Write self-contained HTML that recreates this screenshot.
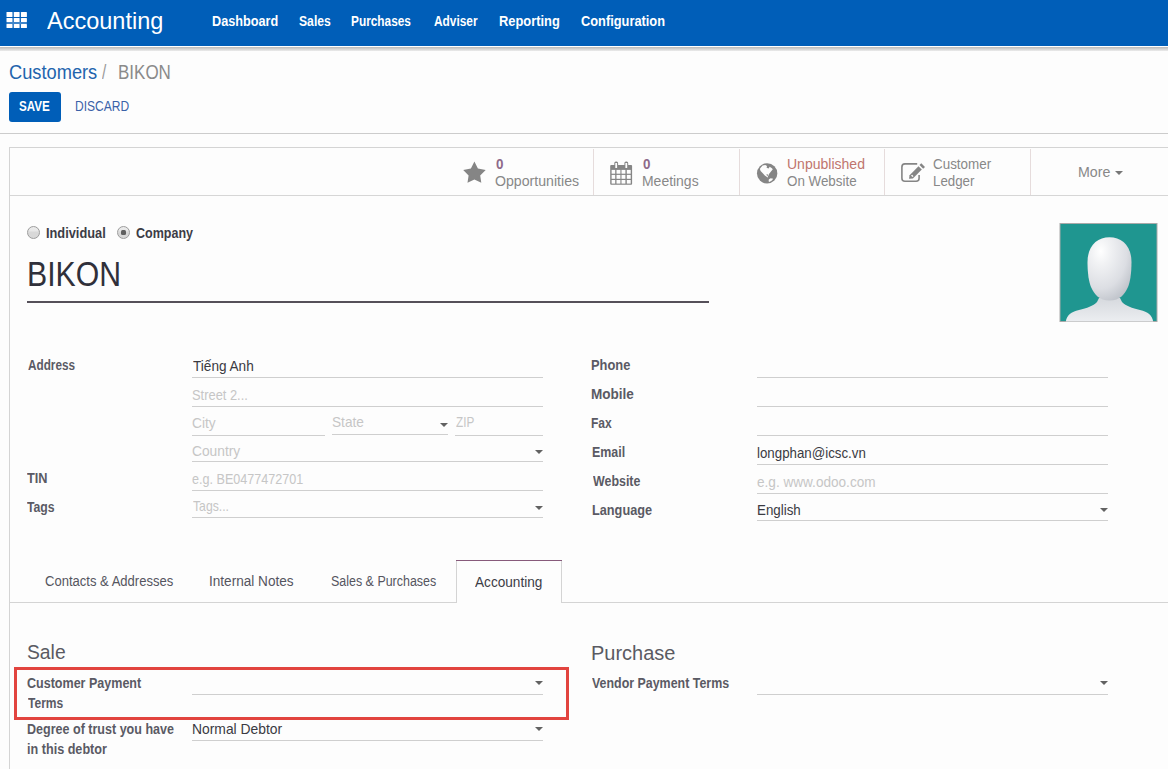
<!DOCTYPE html>
<html><head><meta charset="utf-8">
<style>
html,body{margin:0;padding:0;}
body{width:1168px;height:769px;overflow:hidden;position:relative;background:#fdfdfd;font-family:"Liberation Sans",sans-serif;}
.t{position:absolute;white-space:nowrap;transform-origin:0 0;}
.r{position:absolute;}
.hl{position:absolute;height:1px;background:#cfcfcf;}
.caret{position:absolute;width:0;height:0;border-left:4px solid transparent;border-right:4px solid transparent;border-top:4px solid #626262;}
.sep{position:absolute;top:149px;width:1px;height:46px;background:#e6dcdc;}
</style></head><body>
<!-- navbar -->
<div class="r" style="left:0;top:0;width:1168px;height:46px;background:#005eb8"></div>
<div class="r" style="left:0;top:46px;width:1168px;height:1px;background:#ffffff"></div>
<div class="r" style="left:0;top:47px;width:1168px;height:4px;background:linear-gradient(#b9b9b9,#ececec)"></div>
<!-- app grid icon -->
<svg class="r" style="left:0;top:0" width="30" height="30" viewBox="0 0 30 30"><g fill="#fff"><rect x="6.5" y="12" width="6" height="5" rx="0.6"/><rect x="13.75" y="12" width="5.85" height="5" rx="0.6"/><rect x="20.9" y="12" width="6" height="5" rx="0.6"/><rect x="6.5" y="18" width="6" height="4" rx="0.6"/><rect x="13.75" y="18" width="5.85" height="4" rx="0.6"/><rect x="20.9" y="18" width="6" height="4" rx="0.6"/><rect x="6.5" y="24" width="6" height="4" rx="0.6"/><rect x="13.75" y="24" width="5.85" height="4" rx="0.6"/><rect x="20.9" y="24" width="6" height="4" rx="0.6"/></g><rect x="6.5" y="22" width="20.4" height="2" fill="#fff" opacity="0.25"/></svg>
<!-- control panel -->
<div class="r" style="left:9px;top:92px;width:52px;height:30px;background:#005eb8;border-radius:3px"></div>
<div class="hl" style="left:0;top:133px;width:1168px;background:#cccccc"></div>
<!-- sheet -->
<div class="r" style="left:9px;top:147px;width:1200px;height:700px;border:1px solid #d4d4d4;background:#fdfdfd;box-sizing:border-box"></div>
<div class="hl" style="left:10px;top:195px;width:1158px;background:#d6d6d6"></div>
<div class="sep" style="left:593px"></div>
<div class="sep" style="left:739px"></div>
<div class="sep" style="left:884px"></div>
<div class="sep" style="left:1030px"></div>
<!-- star -->
<svg class="r" style="left:458px;top:156px" width="32" height="32" viewBox="0 0 32 32">
<path fill="#858585" d="M16.4 5.6L19.9 12.6L27.7 13.9L22.2 19.5L23.3 26.8L16.4 23.6L9.5 26.8L10.6 19.5L5.2 13.9L12.9 12.6Z"/></svg>
<!-- calendar -->
<svg class="r" style="left:605px;top:156px" width="32" height="34" viewBox="0 0 32 34">
<rect x="5.2" y="9.1" width="21.9" height="19.7" rx="1" fill="#858585"/>
<g fill="#fdfdfd">
<rect x="6.6" y="13.9" width="3.6" height="3.8"/><rect x="11.5" y="13.9" width="3.9" height="3.8"/><rect x="16.5" y="13.9" width="3.9" height="3.8"/><rect x="21.8" y="13.9" width="3.9" height="3.8"/>
<rect x="6.6" y="18.9" width="3.6" height="3.9"/><rect x="11.5" y="18.9" width="3.9" height="3.9"/><rect x="16.5" y="18.9" width="3.9" height="3.9"/><rect x="21.8" y="18.9" width="3.9" height="3.9"/>
<rect x="6.6" y="24" width="3.6" height="3.6"/><rect x="11.5" y="24" width="3.9" height="3.6"/><rect x="16.5" y="24" width="3.9" height="3.6"/><rect x="21.8" y="24" width="3.9" height="3.6"/>
</g>
<rect x="9.3" y="5.4" width="3.8" height="7.2" rx="1.6" fill="#858585"/>
<rect x="19.4" y="5.4" width="3.8" height="7.2" rx="1.6" fill="#858585"/>
<rect x="10.3" y="7.0" width="1.8" height="5" fill="#fdfdfd"/>
<rect x="20.4" y="7.0" width="1.8" height="5" fill="#fdfdfd"/>
</svg>
<!-- globe -->
<svg class="r" style="left:752px;top:156px" width="32" height="34" viewBox="0 0 32 34">
<circle cx="15.15" cy="17.4" r="10.2" fill="#858585"/>
<path fill="#fdfdfd" d="M8.2 12.2L10.6 9.5L13.3 9.1L15 10L14.6 11.7L16.6 12.4L17.7 10.8L19.9 12.2L20.8 13.3L18.6 15.9L17 18.1L16.4 19.5L15.7 20.8L16.2 21.7L14.6 20.8L12.8 19.5L10.8 17.3L8.6 15L8 13.3Z"/>
<path fill="#858585" d="M14.3 18.6L15.6 18.2L16.2 19.3L15.2 19.9Z"/>
<path fill="#fdfdfd" d="M16.8 23.5L18.6 22.3L21.2 22.8L19.9 24.6L17.3 25.9L16.6 25.2Z"/>
</svg>
<!-- edit icon -->
<svg class="r" style="left:896px;top:156px" width="34" height="34" viewBox="0 0 34 34">
<path fill="none" stroke="#858585" stroke-width="1.6" d="M21.2 7.9H8.9a3 3 0 0 0-3 3V22.2a3 3 0 0 0 3 3H20.1a3 3 0 0 0 3-3V19"/>
<path fill="#858585" d="M13 22.8L13.6 19.2L22.5 10.3L25.8 13.6L16.9 22.5Z"/>
<path fill="#858585" d="M25.3 7.2L29 10.9L27.2 12.7L23.5 9Z"/>
<path fill="#fdfdfd" d="M15 19.6L16.2 18.8L17.5 20.2L16.4 21Z"/>
</svg>
<div class="caret" style="left:1115px;top:171px;border-top-color:#777"></div>
<!-- radios -->
<div class="r" style="left:27px;top:226px;width:11px;height:11px;border-radius:50%;border:1px solid #9c9c9c;background:linear-gradient(#ececec 0,#e6e6e6 40%,#d8d8d8 42%,#d8d8d8 100%)"></div>
<div class="r" style="left:117px;top:226px;width:11px;height:11px;border-radius:50%;border:1px solid #9c9c9c;background:linear-gradient(#ececec 0,#e6e6e6 40%,#d8d8d8 42%,#d8d8d8 100%)"></div>
<div class="r" style="left:121px;top:230px;width:5px;height:5px;border-radius:1.5px;background:#606060"></div>
<!-- title underline -->
<div class="r" style="left:27px;top:301px;width:682px;height:2px;background:#555059"></div>
<!-- avatar -->
<svg class="r" style="left:1059px;top:222px" width="100" height="101" viewBox="0 0 100 101">
<defs>
<radialGradient id="hg" cx="0.3" cy="0.22" r="0.85"><stop offset="0" stop-color="#ffffff"/><stop offset="0.25" stop-color="#f1f2f4"/><stop offset="0.7" stop-color="#dcdee3"/><stop offset="1" stop-color="#bfc3ca"/></radialGradient>
<linearGradient id="sg" x1="0" y1="0" x2="0" y2="1"><stop offset="0" stop-color="#d6d9de"/><stop offset="1" stop-color="#eceef1"/></linearGradient>
</defs>
<rect x="1" y="1.5" width="97" height="98" fill="#1f9690" stroke="#a9a9a9"/>
<path d="M6.8 99.5C8 93 12 90 20 88C28 86 34 84 38 80L40 76L61 76L63 80C67 84 73 86 81 88C89 90 93 93 94.2 99.5Z" fill="url(#sg)"/>
<path d="M50.5 15.3C63 15.3 72.5 24 72.5 40C72.5 52 71 60 69 65C66 72 61 78.5 50.5 78.5C40 78.5 35 72 32 65C30 60 28.5 52 28.5 40C28.5 24 38 15.3 50.5 15.3Z" fill="url(#hg)"/>
</svg>
<!-- left fields lines -->
<div class="hl" style="left:192px;top:377px;width:351px"></div>
<div class="hl" style="left:192px;top:406px;width:351px"></div>
<div class="hl" style="left:192px;top:435px;width:133px"></div>
<div class="hl" style="left:332px;top:434px;width:116px"></div>
<div class="hl" style="left:455px;top:435px;width:88px"></div>
<div class="hl" style="left:192px;top:461px;width:351px"></div>
<div class="hl" style="left:192px;top:490px;width:351px"></div>
<div class="hl" style="left:192px;top:517px;width:351px"></div>
<div class="caret" style="left:440px;top:423px"></div>
<div class="caret" style="left:535px;top:450px"></div>
<div class="caret" style="left:535px;top:506px"></div>
<!-- right fields lines -->
<div class="hl" style="left:757px;top:377px;width:351px"></div>
<div class="hl" style="left:757px;top:406px;width:351px"></div>
<div class="hl" style="left:757px;top:435px;width:351px"></div>
<div class="hl" style="left:757px;top:464px;width:351px"></div>
<div class="hl" style="left:757px;top:493px;width:351px"></div>
<div class="hl" style="left:757px;top:520px;width:351px"></div>
<div class="caret" style="left:1100px;top:508px"></div>
<!-- tabs -->
<div class="hl" style="left:10px;top:602px;width:446px;background:#d4d4d4"></div>
<div class="hl" style="left:562px;top:602px;width:606px;background:#d4d4d4"></div>
<div class="r" style="left:456px;top:560px;width:1px;height:43px;background:#d4d4d4"></div>
<div class="r" style="left:561px;top:560px;width:1px;height:43px;background:#d4d4d4"></div>
<div class="r" style="left:456px;top:560px;width:106px;height:1px;background:#875a7b"></div>
<!-- accounting page -->
<div class="hl" style="left:192px;top:694px;width:351px"></div>
<div class="hl" style="left:192px;top:740px;width:351px"></div>
<div class="hl" style="left:757px;top:694px;width:351px"></div>
<div class="caret" style="left:535px;top:681px"></div>
<div class="caret" style="left:535px;top:727px"></div>
<div class="caret" style="left:1100px;top:681px"></div>
<div class="r" style="left:14px;top:667px;width:555px;height:53px;border:3px solid #e2443f;box-sizing:border-box"></div>
<div class="t" style="left:46.70px;top:9.38px;font-size:24px;line-height:24px;font-weight:400;color:#ffffff;transform:scaleX(0.9795)">Accounting</div>
<div class="t" style="left:211.83px;top:13.63px;font-size:14.5px;line-height:14.5px;font-weight:700;color:#ffffff;transform:scaleX(0.8730)">Dashboard</div>
<div class="t" style="left:298.96px;top:13.63px;font-size:14.5px;line-height:14.5px;font-weight:700;color:#ffffff;transform:scaleX(0.8389)">Sales</div>
<div class="t" style="left:351.38px;top:13.63px;font-size:14.5px;line-height:14.5px;font-weight:700;color:#ffffff;transform:scaleX(0.8167)">Purchases</div>
<div class="t" style="left:434.00px;top:13.63px;font-size:14.5px;line-height:14.5px;font-weight:700;color:#ffffff;transform:scaleX(0.8189)">Adviser</div>
<div class="t" style="left:499.01px;top:13.63px;font-size:14.5px;line-height:14.5px;font-weight:700;color:#ffffff;transform:scaleX(0.8881)">Reporting</div>
<div class="t" style="left:581.02px;top:13.63px;font-size:14.5px;line-height:14.5px;font-weight:700;color:#ffffff;transform:scaleX(0.8839)">Configuration</div>
<div class="t" style="left:8.69px;top:61.97px;font-size:20px;line-height:20px;font-weight:400;color:#2264ad;transform:scaleX(0.9126)">Customers</div>
<div class="t" style="left:101.70px;top:61.97px;font-size:20px;line-height:20px;font-weight:400;color:#9a9a9a;transform:scaleX(0.7667)">/</div>
<div class="t" style="left:117.70px;top:61.97px;font-size:20px;line-height:20px;font-weight:400;color:#8a8a8a;transform:scaleX(0.8492)">BIKON</div>
<div class="t" style="left:18.87px;top:99.15px;font-size:14px;line-height:14px;font-weight:700;color:#ffffff;transform:scaleX(0.8306)">SAVE</div>
<div class="t" style="left:74.64px;top:99.15px;font-size:14px;line-height:14px;font-weight:400;color:#3a62a8;transform:scaleX(0.8581)">DISCARD</div>
<div class="t" style="left:496.00px;top:156.95px;font-size:14px;line-height:14px;font-weight:700;color:#8e6a8a;transform:scaleX(0.9571)">0</div>
<div class="t" style="left:494.99px;top:173.65px;font-size:14px;line-height:14px;font-weight:400;color:#888888;transform:scaleX(1.0098)">Opportunities</div>
<div class="t" style="left:642.70px;top:156.95px;font-size:14px;line-height:14px;font-weight:700;color:#8e6a8a;transform:scaleX(0.9571)">0</div>
<div class="t" style="left:641.70px;top:173.85px;font-size:14px;line-height:14px;font-weight:400;color:#888888;transform:scaleX(0.9964)">Meetings</div>
<div class="t" style="left:787.40px;top:157.15px;font-size:14px;line-height:14px;font-weight:400;color:#c0756e;transform:scaleX(1.0013)">Unpublished</div>
<div class="t" style="left:787.45px;top:173.95px;font-size:14px;line-height:14px;font-weight:400;color:#888888;transform:scaleX(0.9549)">On Website</div>
<div class="t" style="left:933.14px;top:157.15px;font-size:14px;line-height:14px;font-weight:400;color:#888888;transform:scaleX(0.9583)">Customer</div>
<div class="t" style="left:933.15px;top:174.25px;font-size:14px;line-height:14px;font-weight:400;color:#888888;transform:scaleX(0.9512)">Ledger</div>
<div class="t" style="left:1077.99px;top:164.95px;font-size:14px;line-height:14px;font-weight:400;color:#888888;transform:scaleX(1.0133)">More</div>
<div class="t" style="left:46.09px;top:225.95px;font-size:14px;line-height:14px;font-weight:700;color:#3c3c46;transform:scaleX(0.9141)">Individual</div>
<div class="t" style="left:136.21px;top:225.95px;font-size:14px;line-height:14px;font-weight:700;color:#3c3c46;transform:scaleX(0.8937)">Company</div>
<div class="t" style="left:26.81px;top:256.37px;font-size:35px;line-height:35px;font-weight:400;color:#30303a;transform:scaleX(0.8631)">BIKON</div>
<div class="t" style="left:27.70px;top:358.13px;font-size:14.5px;line-height:14.5px;font-weight:700;color:#5a5a64;transform:scaleX(0.8103)">Address</div>
<div class="t" style="left:26.80px;top:470.83px;font-size:14.5px;line-height:14.5px;font-weight:700;color:#5a5a64;transform:scaleX(0.8783)">TIN</div>
<div class="t" style="left:26.80px;top:499.53px;font-size:14.5px;line-height:14.5px;font-weight:700;color:#5a5a64;transform:scaleX(0.8437)">Tags</div>
<div class="t" style="left:192.60px;top:358.73px;font-size:14.5px;line-height:14.5px;font-weight:400;color:#3a3a42;transform:scaleX(0.9375)">Tiếng Anh</div>
<div class="t" style="left:191.81px;top:387.73px;font-size:14.5px;line-height:14.5px;font-weight:400;color:#c6c6c6;transform:scaleX(0.8885)">Street 2...</div>
<div class="t" style="left:191.75px;top:415.73px;font-size:14.5px;line-height:14.5px;font-weight:400;color:#c6c6c6;transform:scaleX(0.9458)">City</div>
<div class="t" style="left:331.66px;top:415.33px;font-size:14.5px;line-height:14.5px;font-weight:400;color:#c6c6c6;transform:scaleX(0.9406)">State</div>
<div class="t" style="left:455.50px;top:415.33px;font-size:14.5px;line-height:14.5px;font-weight:400;color:#c6c6c6;transform:scaleX(0.8091)">ZIP</div>
<div class="t" style="left:191.75px;top:443.83px;font-size:14.5px;line-height:14.5px;font-weight:400;color:#c6c6c6;transform:scaleX(0.9500)">Country</div>
<div class="t" style="left:191.83px;top:471.53px;font-size:14.5px;line-height:14.5px;font-weight:400;color:#c6c6c6;transform:scaleX(0.8685)">e.g. BE0477472701</div>
<div class="t" style="left:192.70px;top:499.13px;font-size:14.5px;line-height:14.5px;font-weight:400;color:#c6c6c6;transform:scaleX(0.8429)">Tags...</div>
<div class="t" style="left:591.41px;top:357.73px;font-size:14.5px;line-height:14.5px;font-weight:700;color:#5a5a64;transform:scaleX(0.8884)">Phone</div>
<div class="t" style="left:591.37px;top:386.83px;font-size:14.5px;line-height:14.5px;font-weight:700;color:#5a5a64;transform:scaleX(0.9341)">Mobile</div>
<div class="t" style="left:591.47px;top:415.63px;font-size:14.5px;line-height:14.5px;font-weight:700;color:#5a5a64;transform:scaleX(0.8292)">Fax</div>
<div class="t" style="left:591.74px;top:444.63px;font-size:14.5px;line-height:14.5px;font-weight:700;color:#5a5a64;transform:scaleX(0.8568)">Email</div>
<div class="t" style="left:592.60px;top:473.63px;font-size:14.5px;line-height:14.5px;font-weight:700;color:#5a5a64;transform:scaleX(0.8564)">Website</div>
<div class="t" style="left:591.72px;top:502.73px;font-size:14.5px;line-height:14.5px;font-weight:700;color:#5a5a64;transform:scaleX(0.8776)">Language</div>
<div class="t" style="left:756.98px;top:446.13px;font-size:14.5px;line-height:14.5px;font-weight:400;color:#3a3a42;transform:scaleX(0.9171)">longphan@icsc.vn</div>
<div class="t" style="left:756.96px;top:474.73px;font-size:14.5px;line-height:14.5px;font-weight:400;color:#c6c6c6;transform:scaleX(0.9368)">e.g. www.odoo.com</div>
<div class="t" style="left:756.98px;top:502.73px;font-size:14.5px;line-height:14.5px;font-weight:400;color:#3a3a42;transform:scaleX(0.9196)">English</div>
<div class="t" style="left:44.57px;top:574.15px;font-size:14px;line-height:14px;font-weight:400;color:#555560;transform:scaleX(0.9309)">Contacts &amp; Addresses</div>
<div class="t" style="left:209.13px;top:574.15px;font-size:14px;line-height:14px;font-weight:400;color:#555560;transform:scaleX(0.9709)">Internal Notes</div>
<div class="t" style="left:330.91px;top:574.15px;font-size:14px;line-height:14px;font-weight:400;color:#555560;transform:scaleX(0.8897)">Sales &amp; Purchases</div>
<div class="t" style="left:475.40px;top:574.75px;font-size:14px;line-height:14px;font-weight:400;color:#3c3c46;transform:scaleX(0.9725)">Accounting</div>
<div class="t" style="left:27.06px;top:642.15px;font-size:20.5px;line-height:20.5px;font-weight:400;color:#5a5a62;transform:scaleX(0.9410)">Sale</div>
<div class="t" style="left:590.85px;top:642.65px;font-size:20.5px;line-height:20.5px;font-weight:400;color:#5a5a62;transform:scaleX(0.9750)">Purchase</div>
<div class="t" style="left:26.64px;top:675.93px;font-size:14.5px;line-height:14.5px;font-weight:700;color:#5a5a64;transform:scaleX(0.8641)">Customer Payment</div>
<div class="t" style="left:27.50px;top:695.53px;font-size:14.5px;line-height:14.5px;font-weight:700;color:#5a5a64;transform:scaleX(0.8310)">Terms</div>
<div class="t" style="left:26.64px;top:721.73px;font-size:14.5px;line-height:14.5px;font-weight:700;color:#5a5a64;transform:scaleX(0.8645)">Degree of trust you have</div>
<div class="t" style="left:26.63px;top:741.63px;font-size:14.5px;line-height:14.5px;font-weight:700;color:#5a5a64;transform:scaleX(0.8703)">in this debtor</div>
<div class="t" style="left:191.84px;top:721.73px;font-size:14.5px;line-height:14.5px;font-weight:400;color:#3a3a42;transform:scaleX(0.9559)">Normal Debtor</div>
<div class="t" style="left:592.30px;top:675.63px;font-size:14.5px;line-height:14.5px;font-weight:700;color:#5a5a64;transform:scaleX(0.8562)">Vendor Payment Terms</div>
</body></html>
